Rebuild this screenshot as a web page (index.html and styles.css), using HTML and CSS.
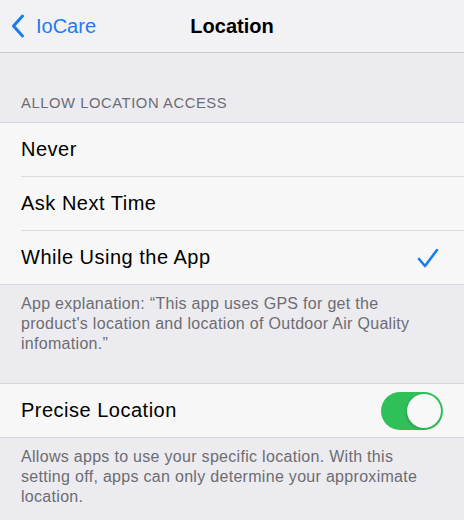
FILE: index.html
```html
<!DOCTYPE html>
<html>
<head>
<meta charset="utf-8">
<link rel="stylesheet" href="styles.css">
</head>
<body>
<div class="nav">
  <div class="back">
    <svg class="chev" width="14" height="24" viewBox="0 0 14 24"><path d="M11.5 2 L2.5 12 L11.5 22" fill="none" stroke="#1a7cf5" stroke-width="3" stroke-linecap="round" stroke-linejoin="round"/></svg>
    <span>IoCare</span>
  </div>
  <div class="title">Location</div>
</div>

<div class="section-header">ALLOW LOCATION ACCESS</div>
<div class="group">
  <div class="row"><span>Never</span></div>
  <div class="row"><span>Ask Next Time</span></div>
  <div class="row"><span>While Using the App</span>
    <svg class="check" width="22" height="20" viewBox="0 0 22 20"><path d="M2 11 L8 18 L20 2" fill="none" stroke="#1a7cf5" stroke-width="2.6" stroke-linecap="round" stroke-linejoin="round"/></svg>
  </div>
</div>
<div class="footer">App explanation: “This app uses GPS for get the product's location and location of Outdoor Air Quality infomation.”</div>

<div class="group">
  <div class="row"><span>Precise Location</span>
    <div class="toggle"><div class="knob"></div></div>
  </div>
</div>
<div class="footer">Allows apps to use your specific location. With this setting off, apps can only determine your approximate location.</div>
</body>
</html>
```
FILE: styles.css
```css
html, body {
  margin: 0;
  padding: 0;
}
body {
  background: #ebebf0;
  font-family: "Liberation Sans", Arial, sans-serif;
  color: #000;
  width: 464px;
  height: 520px;
  overflow: hidden;
}
.nav {
  height: 52px;
  background: #f2f2f4;
  border-bottom: 1px solid #cdcdd1;
  position: relative;
  display: flex;
  align-items: center;
}
.back {
  display: flex;
  align-items: center;
  padding-left: 11px;
  color: #1a7cf5;
  font-size: 20px;
  gap: 11px;
}
.title {
  position: absolute;
  left: 0;
  right: 0;
  text-align: center;
  font-weight: bold;
  font-size: 20px;
  pointer-events: none;
}
.section-header {
  padding: 41px 21px 10px;
  font-size: 14.8px;
  line-height: 18px;
  color: #6d6d72;
  letter-spacing: 0.55px;
}
.group {
  background: #f7f7f7;
  border-top: 1px solid #d6d6da;
  border-bottom: 1px solid #d6d6da;
}
.row {
  height: 53px;
  margin-left: 21px;
  padding-right: 21px;
  display: flex;
  align-items: center;
  justify-content: space-between;
  font-size: 20px;
  letter-spacing: 0.5px;
  border-bottom: 1px solid #dcdce0;
}
.row:last-child {
  border-bottom: none;
}
.check {
  margin-right: 4px;
}
.footer {
  padding: 9px 21px 29px;
  font-size: 16px;
  line-height: 20px;
  color: #6d6d72;
  letter-spacing: 0.3px;
}
.toggle {
  width: 62px;
  height: 38px;
  border-radius: 19px;
  background: #30c05a;
  position: relative;
}
.knob {
  position: absolute;
  right: 2px;
  top: 2px;
  width: 34px;
  height: 34px;
  border-radius: 50%;
  background: #f8f8f8;
  box-shadow: -1px 1px 3px rgba(0,0,0,0.18);
}
```
